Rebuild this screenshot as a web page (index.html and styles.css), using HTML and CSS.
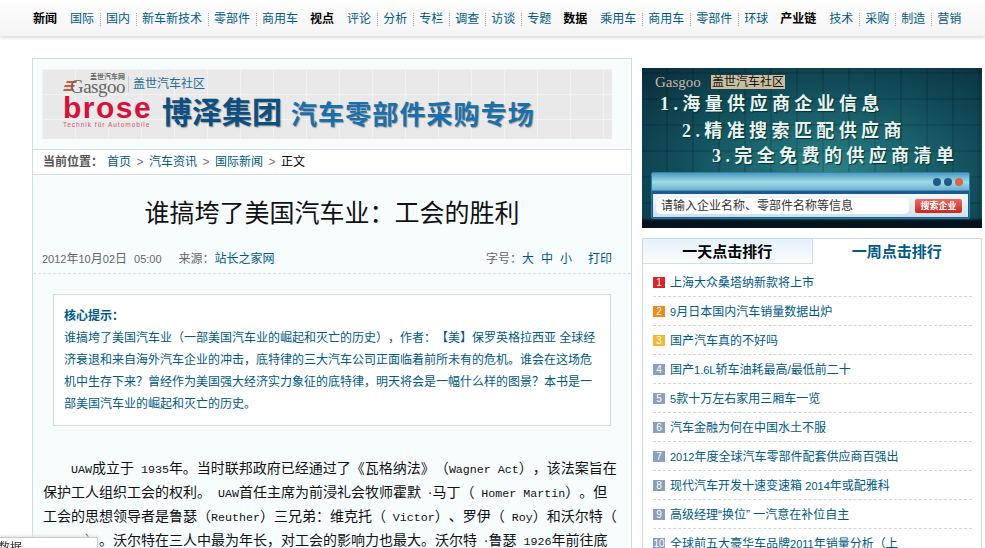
FILE: index.html
```html
<!DOCTYPE html>
<html lang="zh-CN">
<head>
    <meta charset="UTF-8">
    <title>谁搞垮了美国汽车业：工会的胜利</title>
    <link rel="stylesheet" href="styles.css">
</head>
<body>

    <div class="topnav">
        <div class="nav-group"><strong>新闻</strong><a href="#">国际</a><a href="#">国内</a><a href="#">新车新技术</a><a href="#">零部件</a><a href="#">商用车</a></div>
        <div class="nav-group"><strong>视点</strong><a href="#">评论</a><a href="#">分析</a><a href="#">专栏</a><a href="#">调查</a><a href="#">访谈</a><a href="#">专题</a></div>
        <div class="nav-group"><strong>数据</strong><a href="#">乘用车</a><a href="#">商用车</a><a href="#">零部件</a><a href="#">环球</a></div>
        <div class="nav-group"><strong>产业链</strong><a href="#">技术</a><a href="#">采购</a><a href="#">制造</a><a href="#">营销</a></div>
    </div>

    <div class="wrap">
        <div class="main">
            <div class="brose">
                <div class="brose-top">
                    <svg class="gasgoo-mark" width="14" height="10" viewBox="0 0 14 10">
                        <path d="M4 0h10l-1 2H3zM2 4h10l-1 2H1zM1 8h10l-1 2H0z" fill="#d8553c"/>
                    </svg>
                    <div class="gasgoo-logo">
                        <span class="gasgoo-small">盖世汽车网</span>
                        <span class="gasgoo-word">Gasgoo</span>
                    </div>
                    <span class="gasgoo-cn">盖世汽车社区</span>
                </div>
                <div class="brose-bottom">
                    <div class="brose-logo">
                        <span class="brose-name">brose</span>
                        <span class="brose-sub">Technik für Automobile</span>
                    </div>
                    <span class="brose-group">博泽集团</span>
                    <span class="brose-title">汽车零部件采购专场</span>
                </div>
            </div>

            <div class="crumbs">
                <b>当前位置：</b><a href="#">首页</a><i>&gt;</i><a href="#">汽车资讯</a><i>&gt;</i><a href="#">国际新闻</a><i>&gt;</i><span>正文</span>
            </div>

            <h1>谁搞垮了美国汽车业：工会的胜利</h1>

            <div class="meta">
                <div><span class="date"><span class="en12">2012</span>年<span class="en12">10</span>月<span class="en12">02</span>日<span class="time">05:00</span></span><span class="source">来源：<a href="#">站长之家网</a></span></div>
                <div class="meta-tools">字号：<a href="#">大</a><a href="#">中</a><a href="#">小</a><a class="print" href="#">打印</a></div>
            </div>

            <div class="summary">
                <h3>核心提示：</h3>
                <p>谁搞垮了美国汽车业（一部美国汽车业的崛起和灭亡的历史），作者：【美】保罗英格拉西亚 全球经济衰退和来自海外汽车企业的冲击，底特律的三大汽车公司正面临着前所未有的危机。谁会在这场危机中生存下来？曾经作为美国强大经济实力象征的底特律，明天将会是一幅什么样的图景？本书是一部美国汽车业的崛起和灭亡的历史。</p>
            </div>

            <p class="article"><span class="en">UAW</span>成立于 <span class="en">1935</span>年。当时联邦政府已经通过了《瓦格纳法》（<span class="en">Wagner Act</span>），该法案旨在保护工人组织工会的权利。 <span class="en">UAW</span>首任主席为前浸礼会牧师霍默 ·马丁（ <span class="en">Homer Martin</span>）。但工会的思想领导者是鲁瑟（<span class="en">Reuther</span>）三兄弟：维克托（ <span class="en">Victor</span>）、罗伊（ <span class="en">Roy</span>）和沃尔特（ <span class="en">Walter</span>）。沃尔特在三人中最为年长，对工会的影响力也最大。沃尔特 ·鲁瑟 <span class="en">1926</span>年前往底</p>
        </div>

        <div class="side">
            <div class="supply">
                <div class="supply-logo"><span class="supply-word">Gasgoo</span><span class="supply-cn">盖世汽车社区</span></div>
                <div class="supply-line">1.海量供应商企业信息</div>
                <div class="supply-line second">2.精准搜索匹配供应商</div>
                <div class="supply-line third">3.完全免费的供应商清单</div>
                <div class="supply-panel">
                    <div class="panel-dots"><i></i><i></i><i class="close"></i></div>
                    <div class="panel-body">
                        <div class="panel-input">请输入企业名称、零部件名称等信息</div>
                        <div class="panel-btn">搜索企业</div>
                    </div>
                </div>
            </div>

            <div class="rank">
                <div class="tabs">
                    <div class="tab">一天点击排行</div>
                    <div class="tab active">一周点击排行</div>
                </div>
                <ul class="rank-list">
                    <li><span class="num n1">1</span><a href="#">上海大众桑塔纳新款将上市</a></li>
                    <li><span class="num n2">2</span><a href="#"><span class="en12">9</span>月日本国内汽车销量数据出炉</a></li>
                    <li><span class="num n3">3</span><a href="#">国产汽车真的不好吗</a></li>
                    <li><span class="num">4</span><a href="#">国产<span class="en12">1.6L</span>轿车油耗最高/最低前二十</a></li>
                    <li><span class="num">5</span><a href="#"><span class="en12">5</span>款十万左右家用三厢车一览</a></li>
                    <li><span class="num">6</span><a href="#">汽车金融为何在中国水土不服</a></li>
                    <li><span class="num">7</span><a href="#"><span class="en12">2012</span>年度全球汽车零部件配套供应商百强出</a></li>
                    <li><span class="num">8</span><a href="#">现代汽车开发十速变速箱 <span class="en12">2014</span>年或配雅科</a></li>
                    <li><span class="num">9</span><a href="#">高级经理“换位” 一汽意在补位自主</a></li>
                    <li><span class="num">10</span><a href="#">全球前五大豪华车品牌<span class="en12">2011</span>年销量分析（上</a></li>
                </ul>
            </div>
        </div>
    </div>

    <div class="peek"><span>数据</span></div>

</body>
</html>
```

FILE: styles.css
```css
html,
body {
    height: 548px;
    overflow: hidden;
}

body {
    margin: 0;
    background: #fff;
    color: #000;
    font: 12px/1.5 "Liberation Sans", "Noto Sans CJK SC", sans-serif;
    text-spacing-trim: space-all;
}

a {
    color: #005a87;
    text-decoration: none;
}

.topnav {
    display: flex;
    gap: 6px;
    height: 33px;
    margin-top: 3px;
    padding-left: 33px;
    background: linear-gradient(#fdfdfd, #f4f4f4);
    box-shadow: 0 2px 3px #ddd;
    line-height: 33px;
}

.nav-group {
    display: flex;
}

.nav-group strong {
    margin-right: 7px;
}

.nav-group a {
    position: relative;
    padding: 0 6px;
}

.nav-group a + a::before {
    content: "";
    position: absolute;
    left: 0;
    top: 10px;
    height: 13px;
    border-left: 1px dotted #aaa;
}

.wrap {
    display: flex;
    gap: 10px;
    height: 490px;
    padding: 22px 0 0 32px;
}

.main {
    box-sizing: border-box;
    width: 600px;
    height: 490px;
    overflow: hidden;
    border: 1px solid #c8dfea;
    border-bottom: 0;
    background: #f7fcff;
}

.brose {
    box-sizing: border-box;
    width: 570px;
    height: 70px;
    margin: 10px 0 10px 9px;
    padding: 4px 0 0 21px;
    background-color: #e9e9e9;
    background-image:
        linear-gradient(#f2f2f2 1px, transparent 1px),
        linear-gradient(90deg, #f2f2f2 1px, transparent 1px);
    background-size: 33px 25px;
}

.brose-top {
    display: flex;
    align-items: flex-end;
    height: 21px;
}

.gasgoo-mark {
    margin-bottom: 3px;
}

.gasgoo-logo {
    display: flex;
    flex-direction: column;
    align-items: flex-end;
    width: 48px;
    color: #666;
}

.gasgoo-small {
    font-size: 7px;
    font-weight: bold;
    line-height: 7px;
}

.gasgoo-word {
    margin-left: -14px;
    font: 19px/14px "Liberation Serif", serif;
    letter-spacing: -.5px;
}

.gasgoo-cn {
    margin: 0 0 2px 3px;
    padding-left: 4px;
    border-left: 1px solid #ccc;
    color: #1f6d98;
    line-height: 16px;
}

.brose-bottom {
    display: flex;
    align-items: flex-start;
    margin-top: 2px;
}

.brose-logo {
    display: flex;
    flex-direction: column;
    width: 92px;
}

.brose-name {
    color: #d4123a;
    font: bold 30px/24px "Liberation Sans", sans-serif;
    letter-spacing: 1.5px;
}

.brose-sub {
    color: #d4546c;
    font-size: 6.5px;
    line-height: 9px;
    letter-spacing: 1px;
    white-space: nowrap;
}

.brose-group {
    margin-left: 7px;
    color: #0d4f80;
    font-size: 30px;
    font-weight: bold;
    line-height: 34px;
    text-shadow: 1px 1px 1px #999;
}

.brose-title {
    margin: 2px 0 0 9px;
    color: #1a70ac;
    font-size: 26px;
    font-weight: bold;
    line-height: 34px;
    letter-spacing: 1.1px;
    text-shadow: 1px 1px 1px #999;
    white-space: nowrap;
}

.crumbs {
    height: 24px;
    padding-left: 10px;
    border-top: 1px solid #d9e1e6;
    border-bottom: 1px solid #d9e1e6;
    background: #fff;
    line-height: 24px;
}

.crumbs b {
    margin-right: 4px;
    color: #555;
}

.crumbs i {
    display: inline-block;
    width: 18px;
    color: #777;
    font-style: normal;
    text-align: center;
}

h1 {
    margin: 20px 0 0;
    color: #111;
    font-size: 25px;
    font-weight: normal;
    line-height: 36px;
    text-align: center;
}

.meta {
    box-sizing: border-box;
    display: flex;
    justify-content: space-between;
    height: 32px;
    margin-top: 11px;
    padding: 7px 19px 0 9px;
    border-bottom: 1px dashed #dde3e6;
    color: #666;
    line-height: 20px;
}

.date {
    margin-right: 17px;
}

.time {
    margin-left: 7px;
    font-size: 11px;
}

.meta-tools a {
    margin-right: 7px;
}

.meta-tools .print {
    margin: 0 0 0 9px;
}

.summary {
    box-sizing: border-box;
    width: 558px;
    height: 132px;
    margin: 20px 0 0 20px;
    padding: 10px 10px 0;
    border: 1px solid #d3dfe6;
    background: #fff;
    color: #005a87;
}

.summary h3 {
    margin: 0;
    font-size: 12px;
    line-height: 22px;
}

.summary p {
    margin: 0;
    line-height: 22px;
}

.article {
    width: 574px;
    margin: 30px 0 0 10px;
    color: #111;
    font-size: 14px;
    line-height: 24px;
    text-indent: 28px;
    word-spacing: 3px;
}

.en {
    font-family: "Liberation Mono", monospace;
    font-size: 11.67px;
    line-height: 1;
    word-spacing: 0;
}

.side {
    width: 340px;
    margin-top: 10px;
}

.supply {
    position: relative;
    height: 160px;
    background:
        linear-gradient(transparent 150px, #05141c 153px),
        repeating-linear-gradient(0deg, transparent 0 24px, rgba(0, 0, 0, .12) 24px 26px),
        repeating-linear-gradient(90deg, transparent 0 24px, rgba(0, 0, 0, .12) 24px 26px),
        radial-gradient(ellipse at 55% 65%, #2c8388, #12505c 55%, #0a2c3a);
    color: #e8f3f2;
    font-family: "Liberation Serif", "Noto Sans CJK SC", serif;
    overflow: hidden;
}

.supply-logo {
    display: flex;
    align-items: center;
    gap: 3px;
    height: 16px;
    padding: 6px 0 0 13px;
}

.supply-word {
    width: 53px;
    color: #c9b6a0;
    font-size: 15px;
}

.supply-cn {
    padding: 0 1px;
    background: #c9bf9e;
    color: #111;
    font: 12px/14px "Liberation Sans", "Noto Sans CJK SC", sans-serif;
}

.supply-line {
    margin: 3px 0 0 18px;
    font-size: 18px;
    font-weight: bold;
    line-height: 23px;
    letter-spacing: 4.4px;
    text-shadow: 1px 1px 1px #033;
    white-space: nowrap;
}

.supply-line.second {
    margin: 4px 0 0 40px;
}

.supply-line.third {
    margin: 2px 0 0 70px;
}

.supply-panel {
    position: absolute;
    left: 9px;
    top: 104px;
    box-sizing: border-box;
    width: 319px;
    height: 47px;
    border: 1px solid #2f7fb0;
    border-radius: 2px;
    background: linear-gradient(#4f9bbd, #9bdcea 20%, #6fb0cc 38%, #1a5a92 40%);
}

.panel-dots {
    box-sizing: border-box;
    display: flex;
    justify-content: flex-end;
    gap: 3px;
    height: 19px;
    padding: 5px 6px 0 0;
}

.panel-dots i {
    width: 8px;
    height: 8px;
    border-radius: 50%;
    background: #1d5a86;
}

.panel-dots .close {
    background: #d9654d;
}

.panel-body {
    display: flex;
    align-items: center;
    gap: 6px;
    height: 23px;
    margin: 2px 1px 0;
    padding: 0 3px;
    background: linear-gradient(#f4f8f8, #cfe0ea);
}

.panel-input {
    box-sizing: border-box;
    width: 253px;
    height: 16px;
    padding-left: 5px;
    border-radius: 5px;
    background: #fff;
    color: #333;
    font: 12px/16px "Liberation Sans", "Noto Sans CJK SC", sans-serif;
}

.panel-btn {
    width: 47px;
    height: 14px;
    border-radius: 2px;
    background: linear-gradient(#ee6a5e, #c8261f);
    color: #fff;
    font: bold 9px/14px "Liberation Sans", "Noto Sans CJK SC", sans-serif;
    text-align: center;
}

.rank {
    box-sizing: border-box;
    height: 310px;
    margin-top: 10px;
    overflow: hidden;
    border: 1px solid #c8dfea;
    border-bottom: 0;
}

.tabs {
    display: flex;
    height: 25px;
}

.tab {
    flex: 1;
    border-bottom: 1px solid #c8dfea;
    background: linear-gradient(#e6f1fa, #f9fcff);
    font-size: 15px;
    font-weight: bold;
    line-height: 25px;
    text-align: center;
}

.tab.active {
    border-bottom: 0;
    border-left: 1px solid #c8dfea;
    background: #fff;
    color: #005a87;
}

.rank-list {
    margin: 0;
    padding: 4px 9px 0 10px;
    list-style: none;
}

.rank-list li {
    display: flex;
    align-items: center;
    gap: 5px;
    height: 27px;
    padding-top: 1px;
    border-bottom: 1px dashed #d5d5d5;
    white-space: nowrap;
}

.num {
    width: 12px;
    height: 11px;
    background: #8aa0bd;
    color: #fff;
    font-size: 10px;
    line-height: 11px;
    text-align: center;
}

.num.n1 {
    background: #d9252a;
}

.num.n2 {
    background: #f08a1d;
}

.num.n3 {
    background: #f7b92b;
}

.en12 {
    font-size: 11px;
}

.peek {
    position: fixed;
    left: 0;
    top: 537px;
    width: 97px;
    height: 11px;
    overflow: hidden;
    border-top: 1px solid #ccc;
    border-right: 1px solid #ccc;
    background: #fff;
    box-shadow: 0 -1px 3px #ddd;
}

.peek span {
    display: block;
    margin: 1px 0 0 -2px;
    color: #333;
    line-height: 18px;
}
```
